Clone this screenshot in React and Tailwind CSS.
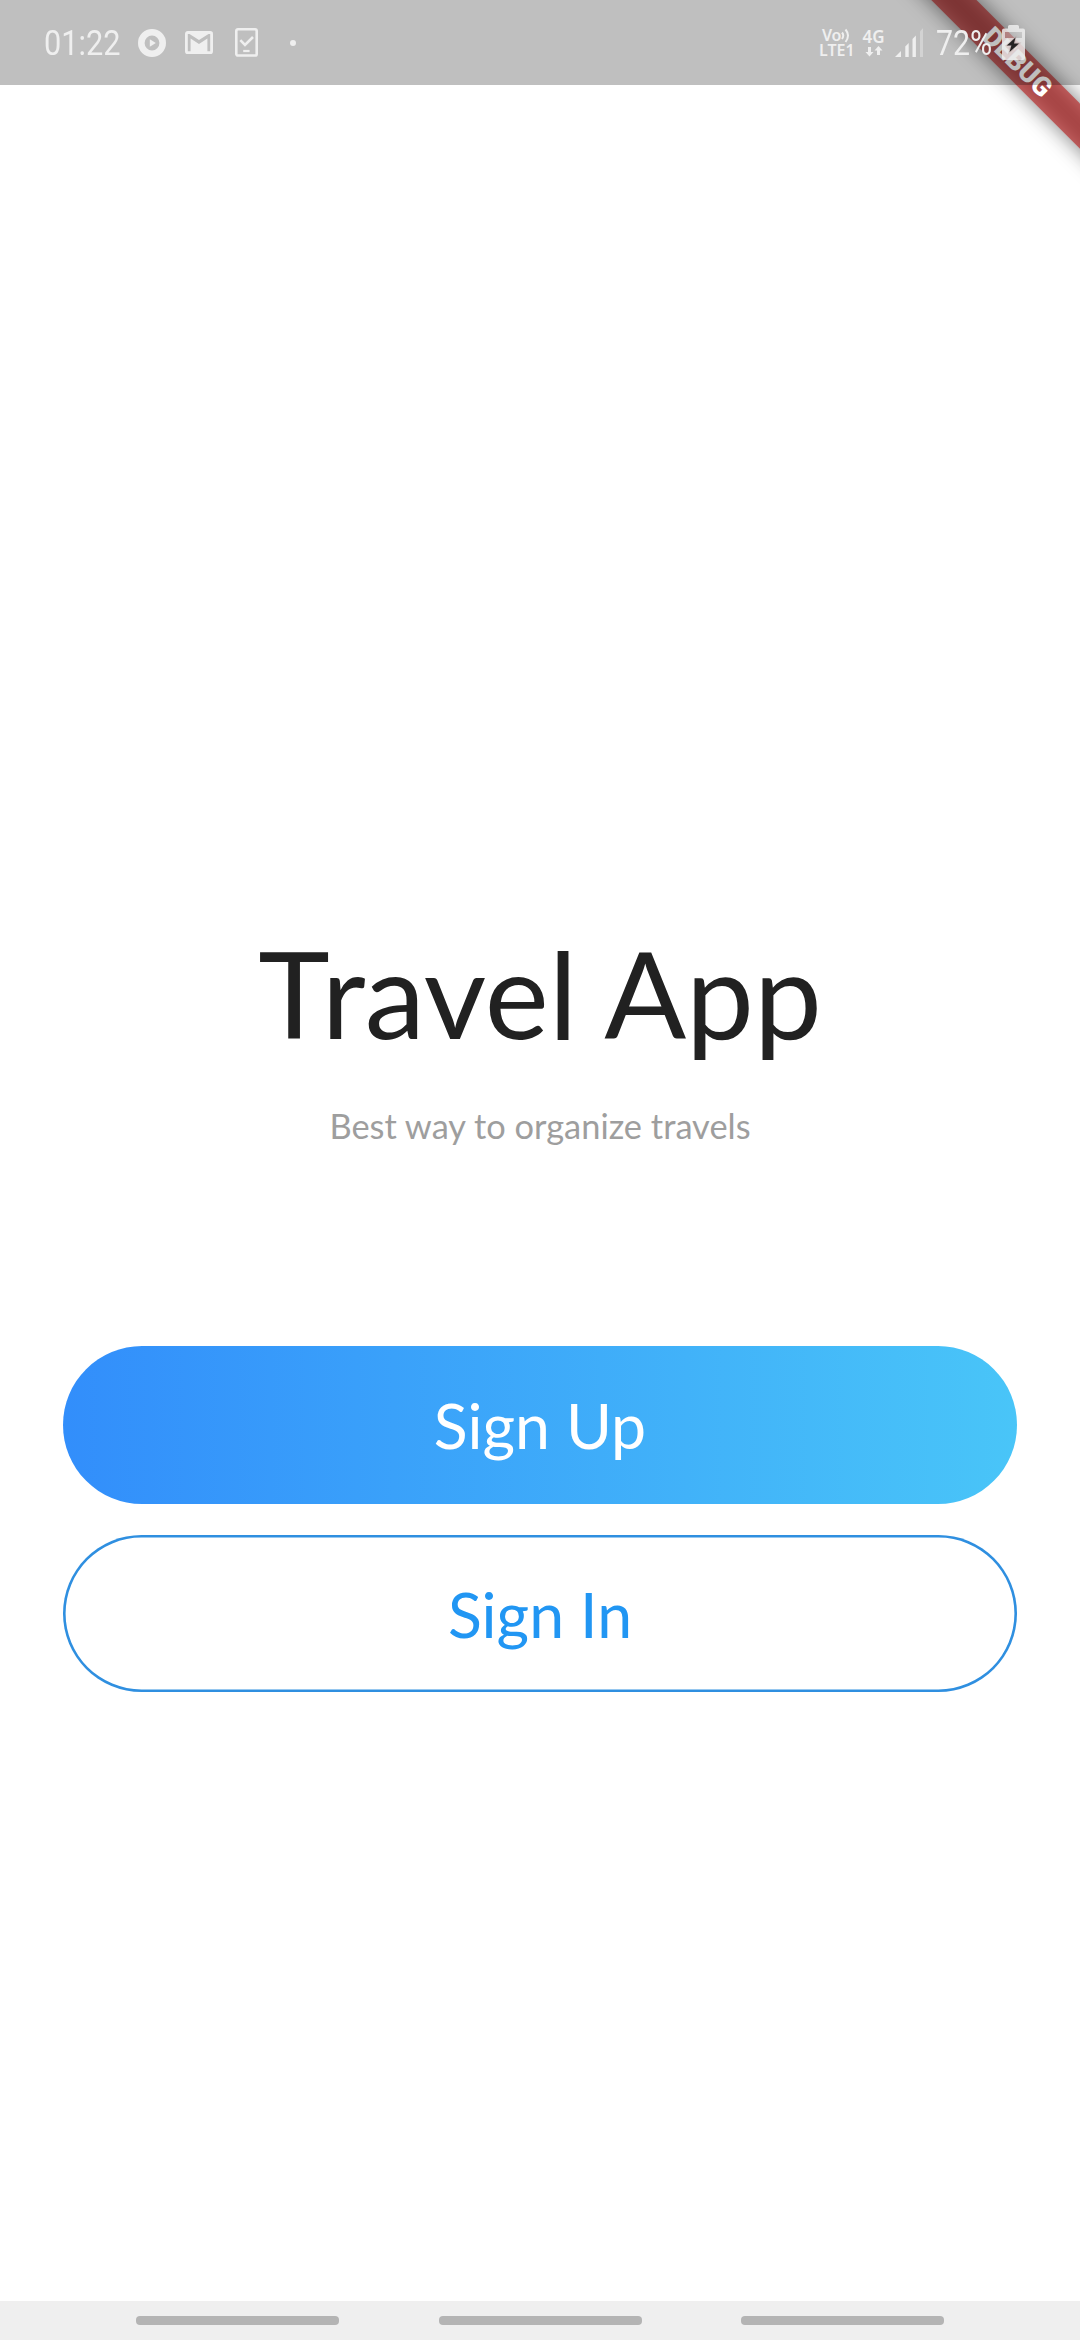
function PlayIcon() {
  return (
    <svg className="ml-[18px] h-[28px] w-[28px]" viewBox="0 0 28 28">
      <path fill="#efefef" fillRule="evenodd" d="M14 0a14 14 0 1 0 0 28a14 14 0 1 0 0-28zM14 6.6a7.4 7.4 0 1 1 0 14.8a7.4 7.4 0 1 1 0-14.8z" />
      <path fill="#efefef" d="M11.8 10.2v7.6l6-3.8z" />
    </svg>
  );
}

function MailIcon() {
  return (
    <svg className="ml-[19px] h-[23px] w-[28px]" viewBox="2 4 20 16" preserveAspectRatio="none">
      <path fill="#efefef" d="M20 18h-2V9.25L12 13 6 9.25V18H4V6h1.2l6.8 4.25L18.8 6H20m0-2H4c-1.11 0-2 .89-2 2v12a2 2 0 0 0 2 2h16a2 2 0 0 0 2-2V6a2 2 0 0 0-2-2z" />
    </svg>
  );
}

function PhoneCheckIcon() {
  return (
    <svg className="ml-[22px] h-[29px] w-[23px]" viewBox="0 0 23 29" fill="none" stroke="#efefef">
      <rect x="1.3" y="1.3" width="20.4" height="26.2" rx="1.6" strokeWidth="2.6" />
      <path d="M5.3 12.2l4.7 4.8 8-8" strokeWidth="2.6" />
      <path d="M8.2 23h6.4" strokeWidth="2.2" />
    </svg>
  );
}

function DataArrows() {
  return (
    <svg className="h-[11px] w-[18px]" viewBox="0 0 18 11" fill="#efefef">
      <path d="M3 1h3v5h2.500L4.500 10.500.5 6H3z" />
      <path d="M12 9h3V4.500h2.500L13.500 0 9.500 4.500H12z" />
    </svg>
  );
}

function SignalBars() {
  return (
    <svg className="ml-[10px] h-[29px] w-[28px]" viewBox="0 0 28 29" fill="#efefef">
      <path d="M0 29L6 23v6z" />
      <path d="M10.300 18.500l3.400-3.400V29h-3.400z" />
      <path d="M17.500 11l3.400-3.400V29h-3.400z" />
      <path d="M25 3.200L28 .3V29h-3z" fill="#d3d3d3" />
    </svg>
  );
}

function Battery() {
  return (
    <svg className="ml-[12px] h-[35px] w-[23px]" viewBox="0 0 23 35">
      <path
        fill="#f0f0f0"
        fillOpacity=".82"
        fillRule="evenodd"
        d="M6 3.500V1.500Q6 0 7.500 0h8Q17 0 17 1.500v2h4q2 0 2 2V33q0 2-2 2H2q-2 0-2-2V5.500q0-2 2-2zM3 7v6h17V7z"
      />
      <rect x="3" y="7" width="17" height="6" fill="#fff" fillOpacity=".35" />
      <path fill="#b39a9a" fillOpacity=".45" d="M14.500 10.500L3 21h5L6 29.500 19.500 17.500h-6z" />
      <path fill="#262222" d="M13.500 12.500L4.800 20.500h4.600L7.500 27l9.500-8.500h-5z" />
    </svg>
  );
}

function DebugRibbon() {
  return (
    <div className="pointer-events-none absolute right-0 top-0 h-[240px] w-[240px] overflow-hidden">
      <div className="absolute left-[-22.900px] top-[47.150px] h-[31.500px] w-[400px] rotate-45 bg-black/50 blur-[10.400px]" />
      <div className="absolute left-[-22.900px] top-[47.150px] flex h-[31.500px] w-[400px] rotate-45 items-center justify-center bg-[#b71c1c]/63">
        <span className="font-[Roboto] text-[26.800px] font-black leading-none text-white">DEBUG</span>
      </div>
    </div>
  );
}

function StatusBar() {
  return (
    <header className="relative flex h-[85px] items-center bg-black/25 font-[Roboto] text-[35px] leading-none text-[#efefef]">
      <span className="ml-[44px] w-[76px] whitespace-nowrap pt-[2px]">
        <span className="inline-block origin-left scale-x-[0.878]">01:22</span>
      </span>
      <PlayIcon />
      <MailIcon />
      <PhoneCheckIcon />
      <span className="ml-[32px] h-[6px] w-[6px] rounded-full bg-[#efefef]" />
      <div className="ml-auto flex items-center">
        <div className="flex w-[35px] flex-col font-['Noto_Sans'] text-[16px] font-semibold leading-[15px]">
          <div className="flex items-center pl-[3px]">
            <span className="tracking-tight">Vo</span>
            <svg className="h-[15px] w-[9px]" viewBox="0 0 9 15" fill="none" stroke="#efefef" strokeWidth="2">
              <path d="M1 4.500q2.500 3 0 6.500M4.500 1.500q5 6 0 12.500" />
            </svg>
          </div>
          <span>LTE1</span>
        </div>
        <div className="ml-[8px] flex w-[23px] flex-col items-center font-['Noto_Sans'] text-[17px] font-semibold leading-[18px]">
          <span>4G</span>
          <DataArrows />
        </div>
        <SignalBars />
        <span className="ml-[13px] w-[54px] whitespace-nowrap pt-[2px]">
          <span className="inline-block origin-left scale-x-[0.865]">72%</span>
        </span>
        <Battery />
      </div>
      <span className="w-[55px]" />
    </header>
  );
}

function NavBar() {
  return (
    <nav className="flex h-[39px] items-center justify-center gap-[99.500px] bg-[#efefef]">
      <span className="h-[9px] w-[203px] rounded-[4px] bg-[#b4b4b4]" />
      <span className="h-[9px] w-[203px] rounded-[4px] bg-[#b4b4b4]" />
      <span className="h-[9px] w-[203px] rounded-[4px] bg-[#b4b4b4]" />
    </nav>
  );
}

export default function App() {
  return (
    <div className="relative flex h-[2340px] w-[1080px] flex-col overflow-hidden bg-white font-[Lato,sans-serif]">
      <DebugRibbon />
      <StatusBar />
      <main className="flex flex-1 flex-col items-center px-[63px] pt-[834px]">
        <h1 className="text-[121.200px] leading-[146px] text-[#212121]">
          <span className="tracking-[-8px]">T</span>ravel App
        </h1>
        <p className="mt-[40px] text-[34.400px] leading-[42px] text-[#9e9e9e]">Best way to organize travels</p>
        <button className="mt-[199px] h-[157.500px] w-full rounded-full bg-linear-to-r/srgb from-[#328efb] to-[#49c5f8] pt-[1px] text-[62.600px] text-white">
          Sign Up
        </button>
        <button className="mt-[31.500px] h-[157px] w-full rounded-full pt-[1px] text-[62.600px] text-[#2196f3] shadow-[inset_0_0_0_2.600px_#2f8fe0]">
          Sign In
        </button>
      </main>
      <NavBar />
    </div>
  );
}
